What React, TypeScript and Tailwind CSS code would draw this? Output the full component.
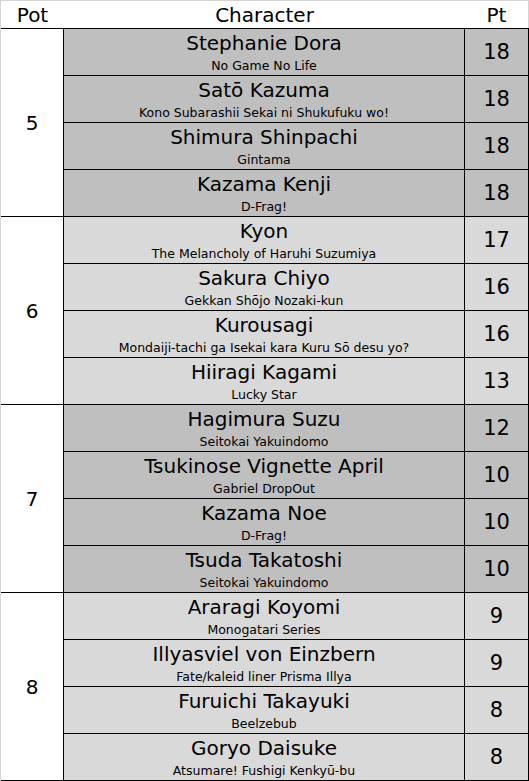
import React from "react";

type Entry = { name: string; series: string; pt: number };
type Pot = { pot: number; shade: "dark" | "light"; entries: Entry[] };

const pots: Pot[] = [
  {
    pot: 5,
    shade: "dark",
    entries: [
      { name: "Stephanie Dora", series: "No Game No Life", pt: 18 },
      { name: "Satō Kazuma", series: "Kono Subarashii Sekai ni Shukufuku wo!", pt: 18 },
      { name: "Shimura Shinpachi", series: "Gintama", pt: 18 },
      { name: "Kazama Kenji", series: "D-Frag!", pt: 18 },
    ],
  },
  {
    pot: 6,
    shade: "light",
    entries: [
      { name: "Kyon", series: "The Melancholy of Haruhi Suzumiya", pt: 17 },
      { name: "Sakura Chiyo", series: "Gekkan Shōjo Nozaki-kun", pt: 16 },
      { name: "Kurousagi", series: "Mondaiji-tachi ga Isekai kara Kuru Sō desu yo?", pt: 16 },
      { name: "Hiiragi Kagami", series: "Lucky Star", pt: 13 },
    ],
  },
  {
    pot: 7,
    shade: "dark",
    entries: [
      { name: "Hagimura Suzu", series: "Seitokai Yakuindomo", pt: 12 },
      { name: "Tsukinose Vignette April", series: "Gabriel DropOut", pt: 10 },
      { name: "Kazama Noe", series: "D-Frag!", pt: 10 },
      { name: "Tsuda Takatoshi", series: "Seitokai Yakuindomo", pt: 10 },
    ],
  },
  {
    pot: 8,
    shade: "light",
    entries: [
      { name: "Araragi Koyomi", series: "Monogatari Series", pt: 9 },
      { name: "Illyasviel von Einzbern", series: "Fate/kaleid liner Prisma Illya", pt: 9 },
      { name: "Furuichi Takayuki", series: "Beelzebub", pt: 8 },
      { name: "Goryo Daisuke", series: "Atsumare! Fushigi Kenkyū-bu", pt: 8 },
    ],
  },
];

function PotGroup({ pot }: { pot: Pot }) {
  const bg = pot.shade === "dark" ? "bg-[#bfbfbf]" : "bg-[#d9d9d9]";

  return (
    <div className="flex border-b border-black">
      <div className="w-[63px] shrink-0 border-r border-black bg-white flex items-center justify-center text-[20px] leading-none">
        {pot.pot}
      </div>
      <div className="flex-1 flex flex-col">
        {pot.entries.map((entry, index) => (
          <div
            key={entry.name}
            className={`flex h-[46px] ${bg} ${
              index < pot.entries.length - 1 ? "border-b border-black" : ""
            } box-content`}
          >
            <div className="w-[400px] shrink-0 border-r border-black box-content flex flex-col items-center pt-[2px]">
              <div className="text-[20px] leading-[24px] whitespace-nowrap">{entry.name}</div>
              <div className="text-[12.5px] leading-[15px] mt-[3px] whitespace-nowrap">
                {entry.series}
              </div>
            </div>
            <div className="w-[63px] shrink-0 border-r border-black box-content flex items-center justify-center text-[21px] leading-none">
              {entry.pt}
            </div>
          </div>
        ))}
      </div>
    </div>
  );
}

export default function App() {
  return (
    <div
      className="w-[529px] h-[781px] bg-white border-t border-l border-[#d4d4d4] text-black overflow-hidden"
      style={{ fontFamily: '"DejaVu Sans", Verdana, sans-serif' }}
    >
      <div className="flex h-[28px] border-b border-black text-[20px]">
        <div className="w-[63px] flex items-center justify-center leading-none">Pot</div>
        <div className="w-[401px] flex items-center justify-center leading-none">Character</div>
        <div className="flex-1 flex items-center justify-center leading-none border-r border-[#d4d4d4]">
          Pt
        </div>
      </div>
      {pots.map((pot) => (
        <PotGroup key={pot.pot} pot={pot} />
      ))}
    </div>
  );
}
